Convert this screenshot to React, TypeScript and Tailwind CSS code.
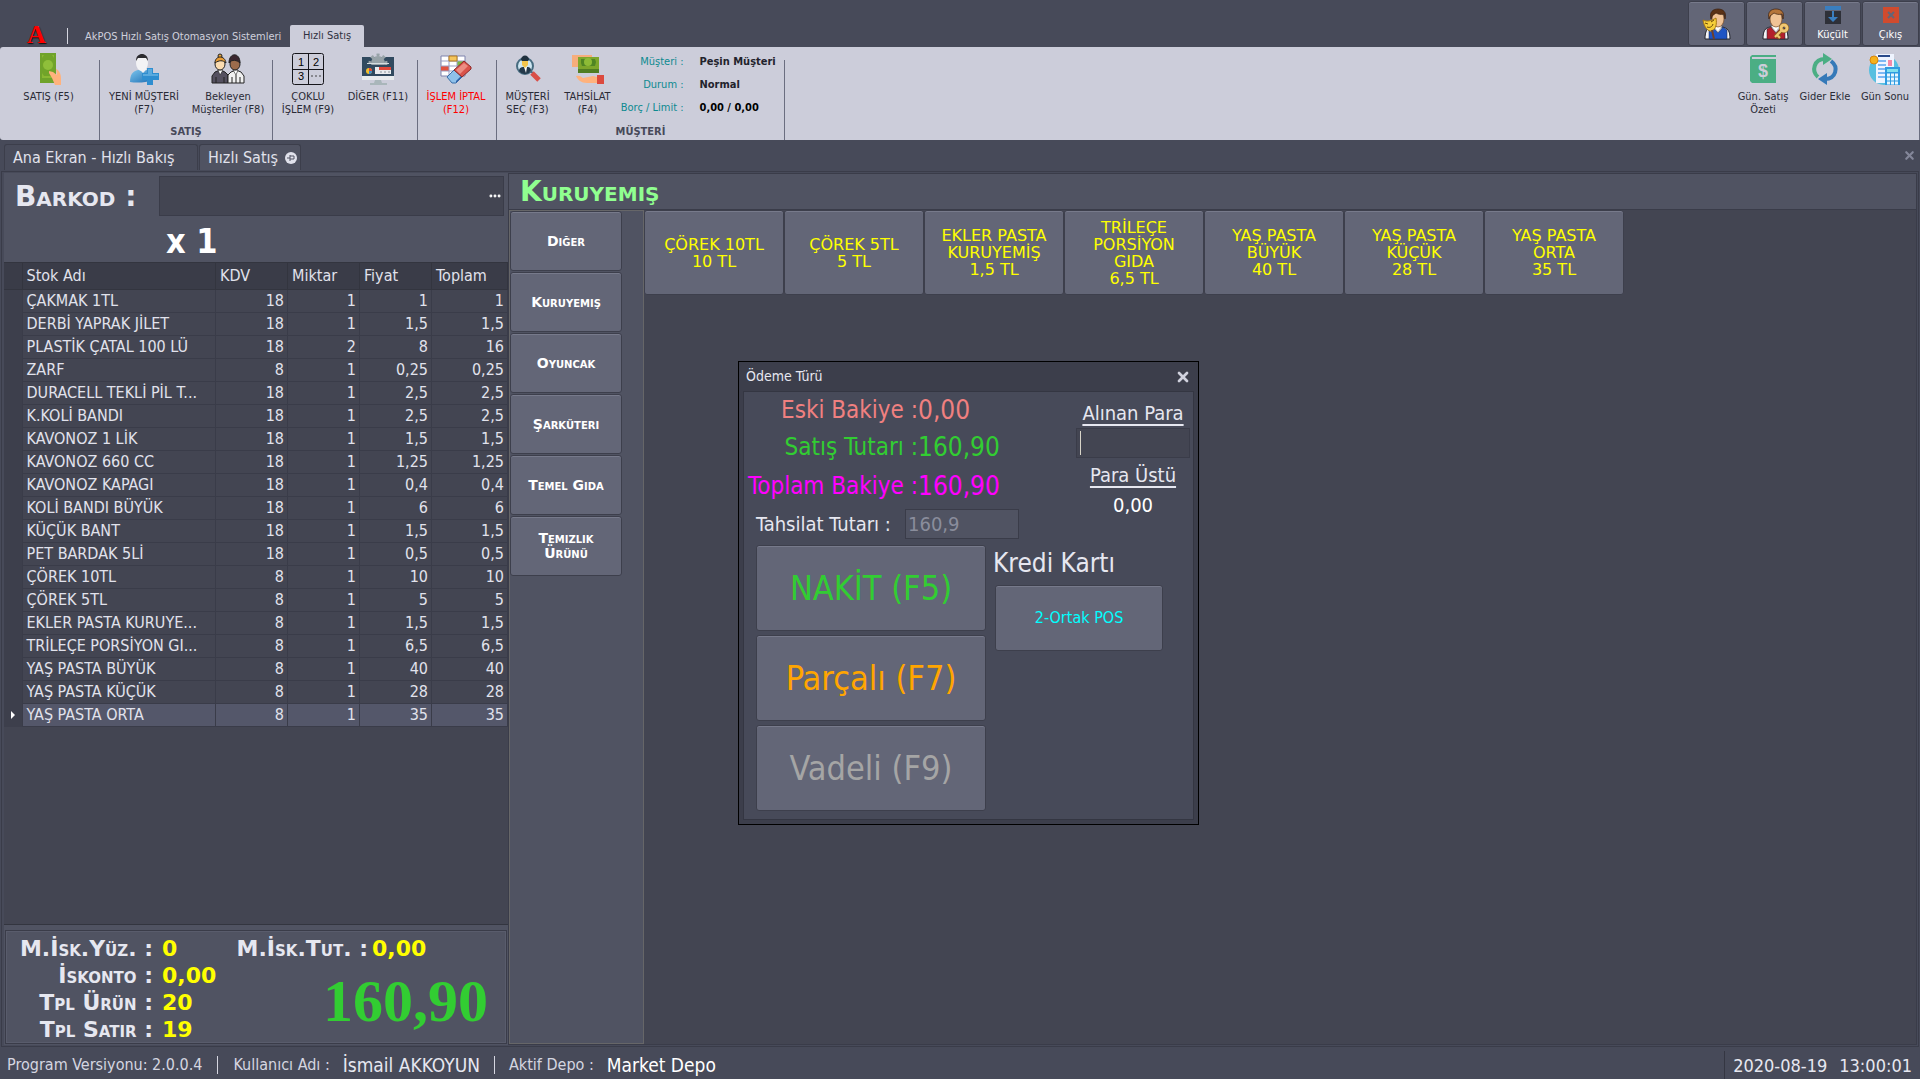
import React from "react";
import { X, MoreHorizontal } from "lucide-react";

const ROWS = [
    ["ÇAKMAK 1TL", "18", "1", "1", "1"],
    ["DERBİ YAPRAK JİLET", "18", "1", "1,5", "1,5"],
    ["PLASTİK ÇATAL 100 LÜ", "18", "2", "8", "16"],
    ["ZARF", "8", "1", "0,25", "0,25"],
    ["DURACELL TEKLİ PİL T...", "18", "1", "2,5", "2,5"],
    ["K.KOLİ BANDI", "18", "1", "2,5", "2,5"],
    ["KAVONOZ 1 LİK", "18", "1", "1,5", "1,5"],
    ["KAVONOZ 660 CC", "18", "1", "1,25", "1,25"],
    ["KAVONOZ KAPAGI", "18", "1", "0,4", "0,4"],
    ["KOLİ BANDI BÜYÜK", "18", "1", "6", "6"],
    ["KÜÇÜK BANT", "18", "1", "1,5", "1,5"],
    ["PET BARDAK 5Lİ", "18", "1", "0,5", "0,5"],
    ["ÇÖREK 10TL", "8", "1", "10", "10"],
    ["ÇÖREK 5TL", "8", "1", "5", "5"],
    ["EKLER PASTA KURUYE...", "8", "1", "1,5", "1,5"],
    ["TRİLEÇE PORSİYON GI...", "8", "1", "6,5", "6,5"],
    ["YAŞ PASTA BÜYÜK", "8", "1", "40", "40"],
    ["YAŞ PASTA KÜÇÜK", "8", "1", "28", "28"],
    ["YAŞ PASTA ORTA", "8", "1", "35", "35"],
];

const CATEGORIES = ["Diğer", "Kuruyemiş", "Oyuncak", "Şarküteri", "Temel Gıda", "Temizlik Ürünü"];

const PRODUCTS = [
    ["ÇÖREK 10TL", "10 TL"],
    ["ÇÖREK 5TL", "5 TL"],
    ["EKLER PASTA", "KURUYEMİŞ", "1,5 TL"],
    ["TRİLEÇE", "PORSİYON", "GIDA", "6,5 TL"],
    ["YAŞ PASTA", "BÜYÜK", "40 TL"],
    ["YAŞ PASTA", "KÜÇÜK", "28 TL"],
    ["YAŞ PASTA", "ORTA", "35 TL"],
];

const RAISED = "rounded-[3px] border border-[#3d3f4c] bg-[#636677] shadow-[inset_0_1px_0_#777a8b]";
const BANK = "font-['DejaVu_Sans',sans-serif] [font-variant-caps:small-caps]";

/* ---------- icons ---------- */

function CashIcon() {
    return (
        <svg width="32" height="32" viewBox="0 0 32 32">
            <path d="M7 0h16v30H7z" fill="#6fa32b" />
            <path d="M9 2h12v23H9z" fill="#8ab833" />
            <path d="M11 2h8l2 3v15l-2 3h-8l-2-3V5z" fill="#5d9321" opacity=".55" />
            <circle cx="15" cy="12" r="5" fill="#8fbf3a" />
            <path d="M16 18l4 1 4 3-1-6c3 1 5 5 5 9v7h-6l-3-7-3-5z" fill="#ffb27d" />
        </svg>
    );
}

function NewCustomerIcon() {
    return (
        <svg width="32" height="32" viewBox="0 0 32 32">
            <defs>
                <linearGradient id="body" x1="0" y1="0" x2="1" y2="1">
                    <stop offset="0" stopColor="#7cc4ec" />
                    <stop offset="1" stopColor="#1c6fb4" />
                </linearGradient>
            </defs>
            <path d="M2 29c0-8 3-11 8-12h8c5 1 6 4 6 9v1c-6 3-16 3-22 2z" fill="url(#body)" />
            <path d="M11 16l4 4 4-4z" fill="#eef0f4" />
            <ellipse cx="14" cy="10" rx="6" ry="8" fill="#f3f3f5" />
            <path d="M8 8c0-5 3-7 6-7s6 2 6 7l-2-3H10z" fill="#2b2b2f" />
            <path d="M19 15h6v5h6v7h-6v5h-6v-5h-5v-7h5z" fill="#2e8ed0" />
            <path d="M20 16h4v5h6v2H15v-2h5z" fill="#5aaade" />
        </svg>
    );
}

function WaitingIcon() {
    return (
        <svg width="34" height="32" viewBox="0 0 34 32">
            <path d="M1 30v-7l3-4 5-2 5 2 3 3v8z" fill="#54505f" stroke="#222" />
            <path d="M17 30v-8l3-3 5-2 5 2 3 4v7z" fill="#f1f1f1" stroke="#222" />
            <path d="M7 17l2 5 3-5zM22 17l3 5 2-5z" fill="#fff" stroke="#222" strokeWidth=".6" />
            <circle cx="9" cy="3" r="2" fill="#e7a53c" stroke="#222" />
            <ellipse cx="9" cy="11" rx="5" ry="6" fill="#fbdcb0" stroke="#222" />
            <path d="M4 10c0-8 10-8 11 0-3-3-7-3-11 0z" fill="#e99d35" stroke="#222" />
            <ellipse cx="24" cy="11" rx="5" ry="6" fill="#9c6c4c" stroke="#222" />
            <path d="M18 10c0-11 11-11 11 0-3-3-8-4-11 0z" fill="#3c2830" stroke="#222" />
            <path d="M5 24v6M13 24v6M21 24v6M29 24v6M25 22v8" stroke="#222" />
        </svg>
    );
}

function MultiIcon() {
    return (
        <svg width="32" height="32" viewBox="0 0 32 32" fontFamily="Liberation Sans" fontSize="11">
            <rect x="0.500" y="0.500" width="31" height="31" rx="2" fill="none" stroke="#15151a" />
            <path d="M16.500 1v30M1 16.500h30" stroke="#15151a" />
            <text x="6" y="13">1</text>
            <text x="21" y="13">2</text>
            <text x="6" y="27">3</text>
            <path d="M19 23h2M23 23h2M27 23h2" stroke="#444" />
        </svg>
    );
}

function OtherIcon() {
    return (
        <svg width="32" height="32" viewBox="0 0 32 32">
            <rect x="0" y="4" width="32" height="22" fill="#314a5f" />
            <circle cx="16" cy="10" r="7" fill="#97a3a8" />
            <circle cx="16" cy="10" r="8" fill="none" stroke="#97a3a8" strokeWidth="3" strokeDasharray="3 3" />
            <rect x="0" y="12" width="32" height="11" fill="#314a5f" />
            <path d="M5 11h22v-1H5z" fill="#d5dde0" />
            <rect x="0" y="23" width="32" height="4" fill="#e8ecee" />
            <path d="M13 27h6l1 3h-8zM8 30h17v2H8z" fill="#a9b6ba" />
            <circle cx="7" cy="18" r="3" fill="#f3c12b" />
            <path d="M7 18v-3a3 3 0 0 1 3 3z" fill="#e0483a" />
            <path d="M7 18h3a3 3 0 0 1-3 3z" fill="#3a8fd0" />
            <rect x="13" y="14" width="16" height="7" fill="#e9ecee" />
            <path d="M17 14h12v3H17z" fill="#e0483a" />
            <path d="M18 19h2M22 19h2M26 19h2" stroke="#8b969b" />
        </svg>
    );
}

function CancelIcon() {
    return (
        <svg width="34" height="32" viewBox="0 0 34 32">
            <path d="M2 3h24v20H2z" fill="#fff" stroke="#7f83ad" />
            <path d="M2 13h8v5H2z" fill="#e2523f" />
            <path d="M18 8h7v5h-7z" fill="#7bb843" />
            <path d="M2 8h24M2 13h24M2 18h24M10 3v20M18 3v20" stroke="#9a9dc2" />
            <path d="M10 3h8v5h-8z" fill="#f4c55b" stroke="#b17b22" />
            <path d="M8 24l7-7 8 7-6 6h-4z" fill="#8fc1ea" stroke="#3b6fa8" />
            <path d="M17 30l6-6v-2l-6 6z" fill="#2f62a8" />
            <path d="M15 17l10-9 7 6v2l-9 8z" fill="#d9534b" stroke="#8f2a28" />
            <path d="M17 17l8-7 4 3-8 8z" fill="#ec8d83" />
        </svg>
    );
}

function PickCustomerIcon() {
    return (
        <svg width="32" height="32" viewBox="0 0 32 32">
            <circle cx="13" cy="13" r="8" fill="#cfe7f2" stroke="#476c80" strokeWidth="2" />
            <path d="M7 18c0-3 2-4 4-4h4c3 0 4 1 4 4-3 4-9 4-12 0z" fill="#24394a" />
            <path d="M12 14h3l-1 6z" fill="#fff" />
            <path d="M10 6h6v6l-3 3-3-3z" fill="#f4c64d" />
            <path d="M9 7c0-6 8-6 8 0l-1 1h-6z" fill="#20313e" />
            <path d="M18 18l3 2" stroke="#476c80" strokeWidth="2" />
            <path d="M20 20l7 7" stroke="#d94f48" strokeWidth="5" />
        </svg>
    );
}

function CollectIcon() {
    return (
        <svg width="34" height="32" viewBox="0 0 34 32">
            <path d="M1 2h20v2h-4l-5 3-5 7H1z" fill="#f6ad7b" />
            <path d="M7 4h21v16H7z" fill="#7da62b" />
            <path d="M7 16h21v4H7z" fill="#507d22" />
            <path d="M10 6h4l3 2 3-2h4l1 3-1 4H11l-1-3z" fill="#4f8523" />
            <circle cx="17" cy="9" r="4" fill="#8dbb36" />
            <path d="M5 23c4-1 5 1 7 2l10-2 4 1v6H16c-6 0-9-3-11-7z" fill="#ffb27d" />
            <path d="M26 22h7v9h-7z" fill="#dc4a3e" />
        </svg>
    );
}

function DailyIcon() {
    return (
        <svg width="32" height="32" viewBox="0 0 32 32">
            <path d="M3 4l2-2h24v2H5v2h24v24H5l-2-2z" fill="#4bae84" />
            <text x="16" y="24" fontSize="18" fontWeight="bold" fontFamily="Liberation Sans" fill="#cccdda" textAnchor="middle">$</text>
        </svg>
    );
}

function RefreshIcon() {
    return (
        <svg width="32" height="32" viewBox="0 0 32 32" fill="none" strokeWidth="4">
            <path d="M9 24C2 18 5 6 16 6" stroke="#4bae84" />
            <path d="M14 0l9 6-9 6z" fill="#4bae84" />
            <path d="M22 8c8 6 5 18-6 18" stroke="#3579b8" />
            <path d="M18 20l-9 6 9 6z" fill="#3579b8" />
        </svg>
    );
}

function DayEndIcon() {
    return (
        <svg width="34" height="32" viewBox="0 0 34 32">
            <circle cx="16" cy="17" r="15" fill="#57bfe0" />
            <path d="M8 1h18v29H8z" fill="#eef4ff" />
            <path d="M10 3h12" stroke="#2a4a8a" strokeWidth="2" />
            <path d="M10 8h8M10 12h8M10 16h8M10 20h8M10 24h8" stroke="#7db8f4" strokeWidth="2" />
            <path d="M20 7h4v6h-4z" fill="#f28aa8" />
            <circle cx="6" cy="7" r="4" fill="#f6b21b" stroke="#d8860b" />
            <rect x="17" y="14" width="15" height="18" fill="#2f9be0" />
            <path d="M19 16h11v3H19z" fill="#7fe0ee" />
            <path d="M19 22h11M19 26h11M19 30h11" stroke="#e6f6ff" strokeWidth="3" strokeDasharray="3 1" />
        </svg>
    );
}

function PersonIcon({ vest, hair, mask = false }: { vest: string; hair: string; mask?: boolean }) {
    return (
        <svg width="30" height="32" viewBox="0 0 30 32">
            <path d="M3 31c0-8 2-11 7-12h10c6 1 8 4 8 12z" fill="#f4f4f6" stroke="#22242c" />
            <path d="M7 31V21l4-2 5 6 5-6 4 3v9z" fill={vest} stroke="#1d2238" strokeWidth=".5" />
            <path d="M11 18l5 6 4-6z" fill="#fff" stroke="#888" strokeWidth=".5" />
            <ellipse cx="16" cy="11" rx="6" ry="8" fill="#f0c396" stroke="#7a4a22" strokeWidth=".7" />
            <path d="M9 11C7 4 11 1 16 1s9 3 7 10l-1-5c-4 1-6 0-8-1-1 1-3 2-4 3z" fill={hair} stroke="#3a2010" strokeWidth=".7" />
            {mask ? (
                <>
                    <path d="M1 12c4 2 8 1 13-2 1 6 0 11-4 13-4 1-8-4-9-11z" fill="#f6cf3a" stroke="#a87810" />
                    <path d="M3 15l3 1M9 14l3-2M5 19c3 1 5 0 6-3" stroke="#6b4b08" fill="none" />
                    <path d="M10 22l2 9" stroke="#70402a" strokeWidth="2" />
                </>
            ) : (
                <>
                    <path d="M22 22l-7 7M17 27l3 3" stroke="#8a5a18" strokeWidth="4" />
                    <circle cx="24" cy="20" r="3" fill="none" stroke="#8a5a18" strokeWidth="4" />
                    <path d="M22 22l-7 7M17 27l3 3" stroke="#f0c873" strokeWidth="2" />
                    <circle cx="24" cy="20" r="3" fill="none" stroke="#f0c873" strokeWidth="3" />
                </>
            )}
        </svg>
    );
}

function MinimizeIcon() {
    return (
        <svg width="18" height="18" viewBox="0 0 18 18">
            <path d="M1 5h16v13H1z" fill="#2e3038" />
            <path d="M1 0h16v4H1z" fill="#3a7ebf" />
            <path d="M8 5h2v6h4l-5 5-5-5h4z" fill="#3a7ebf" />
        </svg>
    );
}

function ExitIcon() {
    return (
        <svg width="18" height="18" viewBox="0 0 18 18">
            <path d="M1 1h16v16H1z" fill="#d04b2e" />
            <path d="M6 6l6 6M12 6l-6 6" stroke="#636677" strokeWidth="2" />
        </svg>
    );
}

/* ---------- ribbon ---------- */

function RibbonButton({ icon, lines, width, red = false }: { icon: React.ReactNode; lines: string[]; width: string; red?: boolean }) {
    return (
        <button className={`flex flex-col items-center ${width} ${red ? "text-[#ff0000]" : "text-[#2a2b36]"}`}>
            <span className="flex h-8 items-center">{icon}</span>
            <span className="mt-[5px] text-[11px] leading-[13px] whitespace-nowrap">
                {lines.map((l) => (
                    <span key={l} className="block">{l}</span>
                ))}
            </span>
        </button>
    );
}

function RibbonGroup({ title, width, children }: { title?: string; width: string; children: React.ReactNode }) {
    return (
        <section className={`flex shrink-0 flex-col justify-between ${width}`}>
            <div className="flex justify-center pt-[6px] pr-[2px]">{children}</div>
            {title && <h2 className="text-center text-[11px] leading-[16px] font-bold text-[#474959]">{title}</h2>}
        </section>
    );
}

function Divider() {
    return <div className="mt-[13px] w-px shrink-0 bg-[#6b6e80]" />;
}

function Ribbon() {
    return (
        <div className="flex h-[93px] rounded-l-[3px] bg-[#cccdda]">
            <RibbonGroup width="w-[99px]">
                <RibbonButton icon={<CashIcon />} lines={["SATIŞ (F5)"]} width="w-[96px]" />
            </RibbonGroup>
            <Divider />
            <RibbonGroup title="SATIŞ" width="w-[172px]">
                <RibbonButton icon={<NewCustomerIcon />} lines={["YENİ MÜŞTERİ", "(F7)"]} width="w-[86px]" />
                <RibbonButton icon={<WaitingIcon />} lines={["Bekleyen", "Müşteriler (F8)"]} width="w-[82px]" />
            </RibbonGroup>
            <Divider />
            <RibbonGroup width="w-[144px]">
                <RibbonButton icon={<MultiIcon />} lines={["ÇOKLU", "İŞLEM (F9)"]} width="w-[68px]" />
                <RibbonButton icon={<OtherIcon />} lines={["DİĞER (F11)"]} width="w-[72px]" />
            </RibbonGroup>
            <Divider />
            <RibbonGroup width="w-[78px]">
                <RibbonButton icon={<CancelIcon />} lines={["İŞLEM İPTAL", "(F12)"]} width="w-[76px]" red />
            </RibbonGroup>
            <Divider />
            <RibbonGroup title="MÜŞTERİ" width="w-[287px]">
                <RibbonButton icon={<PickCustomerIcon />} lines={["MÜŞTERİ", "SEÇ (F3)"]} width="w-[60px]" />
                <RibbonButton icon={<CollectIcon />} lines={["TAHSİLAT", "(F4)"]} width="w-[60px]" />
                <dl className="-mt-[3px] grid w-[164px] grid-cols-[66px_1fr] gap-x-4 text-[11px] leading-[23px] font-bold whitespace-nowrap text-[#22232c]">
                    <dt className="text-right font-normal text-[#0d8a90]">Müşteri :</dt>
                    <dd>Peşin Müşteri</dd>
                    <dt className="text-right font-normal text-[#0d8a90]">Durum :</dt>
                    <dd>Normal</dd>
                    <dt className="text-right font-normal text-[#0d8a90]">Borç / Limit :</dt>
                    <dd className="text-black">0,00 / 0,00</dd>
                </dl>
            </RibbonGroup>
            <Divider />
            <div className="ml-auto flex pt-[6px] pr-1">
                <RibbonButton icon={<DailyIcon />} lines={["Gün. Satış", "Özeti"]} width="w-[64px]" />
                <RibbonButton icon={<RefreshIcon />} lines={["Gider Ekle"]} width="w-[60px]" />
                <RibbonButton icon={<DayEndIcon />} lines={["Gün Sonu"]} width="w-[60px]" />
            </div>
            <Divider />
        </div>
    );
}

function TitleBar() {
    const btn = `${RAISED} flex h-[45px] w-[57px] flex-col items-center justify-center text-[11px] leading-[14px] text-white`;
    return (
        <header className="flex h-[47px] justify-between">
            <div className="flex items-end">
                <span className="ml-[27px] w-[18px] font-['Liberation_Serif',serif] text-[26px] leading-[24px] font-bold text-[#ff0000] [text-shadow:1px_1px_1px_#111]">A</span>
                <span className="mb-[3px] ml-[22px] h-4 w-px bg-[#d5d6e0]" />
                <h1 className="ml-[17px] w-[205px] text-[11px] leading-[21px] whitespace-nowrap text-[#cfd0dc]">
                    AkPOS Hızlı Satış Otomasyon Sistemleri
                </h1>
                <button className="h-[22px] w-[74px] rounded-t-[2px] bg-[#cccdda] text-[11px] text-[#2f3140]">Hızlı Satış</button>
            </div>
            <div className="flex gap-px pt-px pr-px">
                <button className={btn} aria-label="Personel"><PersonIcon vest="#1f55c4" hair="#5b3216" mask /></button>
                <button className={btn} aria-label="Yetki"><PersonIcon vest="#b3202c" hair="#b5753a" /></button>
                <button className={btn}><MinimizeIcon /><span className="mt-1">Küçült</span></button>
                <button className={btn}><ExitIcon /><span className="mt-1">Çıkış</span></button>
            </div>
        </header>
    );
}

function TabStrip() {
    return (
        <nav className="flex h-[31px] items-end pb-px pl-1 text-[16px] text-[#e1e2ec]">
            <button className="h-[26px] w-[194px] rounded-t-[3px] border border-b-0 border-[#3c3e4b] bg-[#494c5b] pl-2 text-left leading-[22px]">
                Ana Ekran - Hızlı Bakış
            </button>
            <button className="ml-px flex h-[26px] w-[102px] items-center justify-between rounded-t-[3px] border border-b-0 border-[#3c3e4b] bg-[#505362] pr-[3px] pl-2 leading-[22px]">
                Hızlı Satış
                <svg width="12" height="12" viewBox="0 0 12 12">
                    <circle cx="6" cy="6" r="6" fill="#e1e2ec" />
                    <path d="M2 6h3M5 3v6M5 4h4v3H5" stroke="#505362" fill="none" />
                </svg>
            </button>
            <button aria-label="Kapat" className="mr-1 mb-2 ml-auto text-[#84879a]">
                <X size={13} strokeWidth={4} />
            </button>
        </nav>
    );
}

/* ---------- sale list ---------- */

function SaleTable() {
    const head = "border-r border-[#33353f] pl-1 text-left font-normal";
    const num = "border-r border-b border-[#3a3c49] pr-[3px] text-right";
    return (
        <table className="w-full table-fixed border-collapse text-[16px] leading-[22px] text-[#e1e2ec]">
            <colgroup>
                <col className="w-[18px]" />
                <col />
                <col className="w-[72px]" />
                <col className="w-[72px]" />
                <col className="w-[72px]" />
                <col className="w-[76px]" />
            </colgroup>
            <thead>
                <tr className="h-[27px] border-y border-[#33353f] bg-[#3a3c48]">
                    <th className="border-r border-[#33353f]" />
                    <th className={head}>Stok Adı</th>
                    <th className={head}>KDV</th>
                    <th className={head}>Miktar</th>
                    <th className={head}>Fiyat</th>
                    <th className={head}>Toplam</th>
                </tr>
            </thead>
            <tbody>
                {ROWS.map(([name, kdv, qty, price, total], i) => (
                    <tr key={name} className={`h-[23px] ${i === ROWS.length - 1 ? "bg-[#54576a]" : ""}`}>
                        <td className="border-r border-[#3a3c49] bg-[#3d3f4c]">
                            {i === ROWS.length - 1 && (
                                <svg width="4" height="8" viewBox="0 0 4 8" className="ml-[7px]">
                                    <path d="M0 0l4 4-4 4z" fill="#fff" />
                                </svg>
                            )}
                        </td>
                        <td className="overflow-hidden border-r border-b border-[#3a3c49] pl-1 whitespace-nowrap">{name}</td>
                        <td className={num}>{kdv}</td>
                        <td className={num}>{qty}</td>
                        <td className={num}>{price}</td>
                        <td className={num}>{total}</td>
                    </tr>
                ))}
            </tbody>
        </table>
    );
}

function Totals() {
    return (
        <section className="mx-px mt-[5px] mb-px flex h-[114px] border border-[#3a3c49] font-bold text-[#e6e7f0] shadow-[inset_0_0_0_1px_#595c6c]">
            <dl className={`grid w-[222px] shrink-0 grid-cols-[147px_1fr] content-start gap-x-[9px] pt-1 text-[22px] leading-[27px] whitespace-nowrap ${BANK}`}>
                <dt className="text-right">M.İsk.Yüz. :</dt>
                <dd className="text-[#ffff00]">0</dd>
                <dt className="text-right">İskonto :</dt>
                <dd className="text-[#ffff00]">0,00</dd>
                <dt className="text-right">Tpl Ürün :</dt>
                <dd className="text-[#ffff00]">20</dd>
                <dt className="text-right">Tpl Satır :</dt>
                <dd className="text-[#ffff00]">19</dd>
            </dl>
            <div className="flex-1 pt-1 pr-[18px]">
                <p className={`flex gap-1 text-[22px] leading-[27px] whitespace-nowrap ${BANK}`}>
                    <span className="w-[140px] text-right">M.İsk.Tut. :</span>
                    <span className="text-[#ffff00]">0,00</span>
                </p>
                <output className="mt-[7px] block text-right font-['Liberation_Serif',serif] text-[60px] leading-[64px] text-[#32cd32]">160,90</output>
            </div>
        </section>
    );
}

function SalePanel() {
    return (
        <aside className="flex w-[505px] shrink-0 flex-col border-r border-[#3a3c49] bg-[#505362]">
            <div className="flex items-start">
                <label htmlFor="barkod" className={`w-[155px] pl-[11px] text-[28px] leading-[48px] font-bold whitespace-nowrap text-[#e6e7f0] ${BANK}`}>
                    Barkod :
                </label>
                <div className="mt-[3px] mr-1 flex h-10 flex-1 items-center border border-[#3a3c49] bg-[#434552]">
                    <input id="barkod" className="h-full w-full min-w-0 bg-transparent px-2 text-white outline-none" />
                    <button aria-label="Barkod ara" className="mr-px text-white">
                        <MoreHorizontal size={14} strokeWidth={3} />
                    </button>
                </div>
            </div>
            <p className="pl-[162px] text-[34px] leading-[41px] font-bold text-white">x 1</p>
            <div className="flex-1 border-b border-[#33353f] bg-[#434552]">
                <SaleTable />
            </div>
            <Totals />
        </aside>
    );
}

/* ---------- payment window ---------- */

function PaymentWindow() {
    const pay = `${RAISED} h-[86px] w-full text-[34px]`;
    return (
        <div role="dialog" aria-labelledby="odeme" className="absolute top-[187px] left-[229px] w-[461px] border border-black bg-[#3c3e4b] p-1 pt-0 text-[#e6e7f0]">
            <div className="flex h-[29px] items-center justify-between px-[3px]">
                <h2 id="odeme" className="text-[14px]">Ödeme Türü</h2>
                <button aria-label="Kapat" className="text-[#d0d1dd]"><X size={16} strokeWidth={4} /></button>
            </div>
            <div className="h-[429px] border border-[#343642] bg-[#474a59]">
                <div className="flex justify-between">
                    <dl className="grid grid-cols-[174px_1fr] content-start text-[24px] leading-[37px] whitespace-nowrap">
                        <dt className="text-right text-[#f08080]">Eski Bakiye :</dt>
                        <dd className="text-[26px] text-[#f08080]">0,00</dd>
                        <dt className="text-right text-[#32cd32]">Satış Tutarı :</dt>
                        <dd className="text-[26px] text-[#32cd32]">160,90</dd>
                        <dt className="text-right leading-[40px] text-[#ff00ff]">Toplam Bakiye :</dt>
                        <dd className="text-[26px] leading-[40px] text-[#ff00ff]">160,90</dd>
                    </dl>
                    <div className="mr-[3px] flex w-[114px] flex-col items-center text-[20px] whitespace-nowrap">
                        <label htmlFor="alinan" className="mt-[6px] leading-[30px] underline underline-offset-4">Alınan Para</label>
                        <span className="flex h-[30px] w-full items-center border border-[#3a3c49] bg-[#434552] pl-[3px]">
                            <span className="h-6 w-px shrink-0 bg-[#d8d4c8]" />
                            <input id="alinan" className="w-full min-w-0 bg-transparent outline-none" />
                        </span>
                        <span className="mt-[2px] leading-[30px] underline underline-offset-4">Para Üstü</span>
                        <span className="leading-[30px] text-white">0,00</span>
                    </div>
                </div>
                <div className="-mt-[11px] flex items-center gap-[6px] pl-3 text-[20px]">
                    <label htmlFor="tahsilat" className="w-[143px] whitespace-nowrap">Tahsilat Tutarı :</label>
                    <input id="tahsilat" disabled defaultValue="160,9" className="h-[30px] w-[114px] border border-[#3a3c49] bg-[#505362] px-[2px] text-[#8a8d9c]" />
                </div>
                <div className="mt-[6px] flex gap-[7px] pl-3">
                    <div className="flex w-[230px] flex-col gap-1">
                        <button className={`${pay} text-[#32cd32]`}>NAKİT (F5)</button>
                        <button className={`${pay} text-[#ffa500]`}>Parçalı (F7)</button>
                        <button className={`${pay} text-[#a5a5a5]`}>Vadeli (F9)</button>
                    </div>
                    <div>
                        <h3 className="text-[26px] leading-[36px]">Kredi Kartı</h3>
                        <button className={`${RAISED} mt-1 ml-[2px] h-[66px] w-[168px] text-[16px] text-[#00ffff]`}>2-Ortak POS</button>
                    </div>
                </div>
            </div>
        </div>
    );
}

export default function App() {
    return (
        <div className="flex min-h-screen flex-col bg-[#474a59] font-['DejaVu_Sans_Condensed','DejaVu_Sans',sans-serif]">
            <TitleBar />
            <Ribbon />
            <TabStrip />
            <main className="mx-px flex flex-1 border border-[#3a3c49] p-px pl-[2px]">
                <SalePanel />
                <section className="relative flex min-w-0 flex-1 flex-col border-y border-r border-[#3a3c49]">
                    <h2 className={`h-[36px] border-b border-[#3a3c49] bg-[#505362] pl-[11px] text-[28px] leading-[35px] font-bold text-[#90ff90] ${BANK}`}>Kuruyemiş</h2>
                    <div className="flex flex-1 bg-[#434552]">
                        <div className="flex w-[135px] shrink-0 flex-col gap-px border border-[#666668] bg-[#505362]">
                            {CATEGORIES.map((c) => (
                                <button key={c} className={`${RAISED} h-[60px] w-[112px] px-2 text-[14px] leading-[15px] font-bold text-white ${BANK}`}>{c}</button>
                            ))}
                        </div>
                        <div className="flex flex-1 flex-wrap content-start">
                            {PRODUCTS.map((lines) => (
                                <button key={lines.join(" ")} className={`${RAISED} h-[85px] w-[140px] font-['DejaVu_Sans',sans-serif] text-[16px] leading-[17px] text-[#ffff00]`}>
                                    {lines.map((l) => (
                                        <span key={l} className="block">{l}</span>
                                    ))}
                                </button>
                            ))}
                        </div>
                    </div>
                    <PaymentWindow />
                </section>
            </main>
            <footer className="flex h-[32px] items-center pt-1 text-[16px] whitespace-nowrap text-[#d5d6e0]">
                <span className="pl-[7px]">Program Versiyonu: 2.0.0.4</span>
                <span className="mx-[15px] h-[18px] w-px bg-[#d5d6e0]" />
                <span>Kullanıcı Adı :</span>
                <span className="ml-[13px] text-[19px] text-[#e6e7f0]">İsmail AKKOYUN</span>
                <span className="mx-[14px] h-[18px] w-px bg-[#d5d6e0]" />
                <span>Aktif Depo :</span>
                <span className="ml-[13px] text-[19px] text-white">Market Depo</span>
                <time className="ml-auto flex h-full items-center gap-3 border-l border-[#343642] pr-2 pl-2 text-[18px] text-[#e6e7f0]">
                    <span>2020-08-19</span>
                    <span>13:00:01</span>
                </time>
            </footer>
        </div>
    );
}
